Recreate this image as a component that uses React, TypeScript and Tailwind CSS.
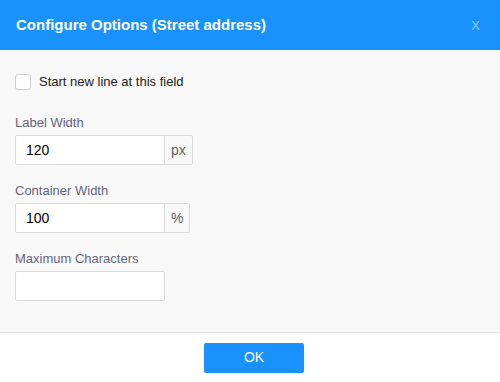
import React, { useState } from "react";

type FieldProps = {
  label: string;
  value?: string;
  addon?: string;
};

function Field({ label, value = "", addon }: FieldProps) {
  const [val, setVal] = useState(value);
  return (
    <div className="flex flex-col">
      <label className="mb-0.5 text-[13px] leading-[20px] text-[#66667f]">{label}</label>
      <div className="flex">
        <input
          value={val}
          onChange={(e) => setVal(e.target.value)}
          className="h-[30px] w-[150px] rounded-l-[2px] border border-[#d9d9d9] bg-white px-[10px] text-[14px] text-black outline-none"
          style={addon ? undefined : { borderRadius: 2 }}
        />
        {addon && (
          <span className="-ml-px flex h-[30px] items-center rounded-r-[2px] border border-[#d9d9d9] bg-[#f8f8f8] px-[6px] text-[14px] text-[#666]">
            {addon}
          </span>
        )}
      </div>
    </div>
  );
}

export default function App() {
  const [newLine, setNewLine] = useState(false);

  return (
    <div className="flex h-[382px] w-[500px] flex-col bg-white font-['Liberation_Sans',Arial,sans-serif]">
      {/* Header */}
      <div className="flex h-[50px] shrink-0 items-center justify-between bg-[#1a92fe] pl-4 pr-5">
        <h2 className="text-[15px] font-bold text-white">Configure Options (Street address)</h2>
        <button className="text-[13px] leading-none text-white/50">X</button>
      </div>

      {/* Body */}
      <div className="flex flex-col bg-[#f8f8f8] px-[15px] pb-[31px] pt-6">
        <label className="flex h-4 cursor-pointer items-center gap-2">
          <input
            type="checkbox"
            checked={newLine}
            onChange={(e) => setNewLine(e.target.checked)}
            className="h-4 w-4 appearance-none rounded-[3px] border border-[#ccc] bg-white"
          />
          <span className="text-[13px] text-[#222]">Start new line at this field</span>
        </label>

        <div className="mt-[23px] flex flex-col gap-4">
          <Field label="Label Width" value="120" addon="px" />
          <Field label="Container Width" value="100" addon="%" />
          <Field label="Maximum Characters" />
        </div>
      </div>

      {/* Footer */}
      <div className="flex flex-1 items-center justify-center border-t border-[#e3e3e3] bg-white">
        <button className="ml-2 h-[30px] w-[100px] rounded-[2px] bg-[#1a92fe] text-[14px] text-white">OK</button>
      </div>
    </div>
  );
}
